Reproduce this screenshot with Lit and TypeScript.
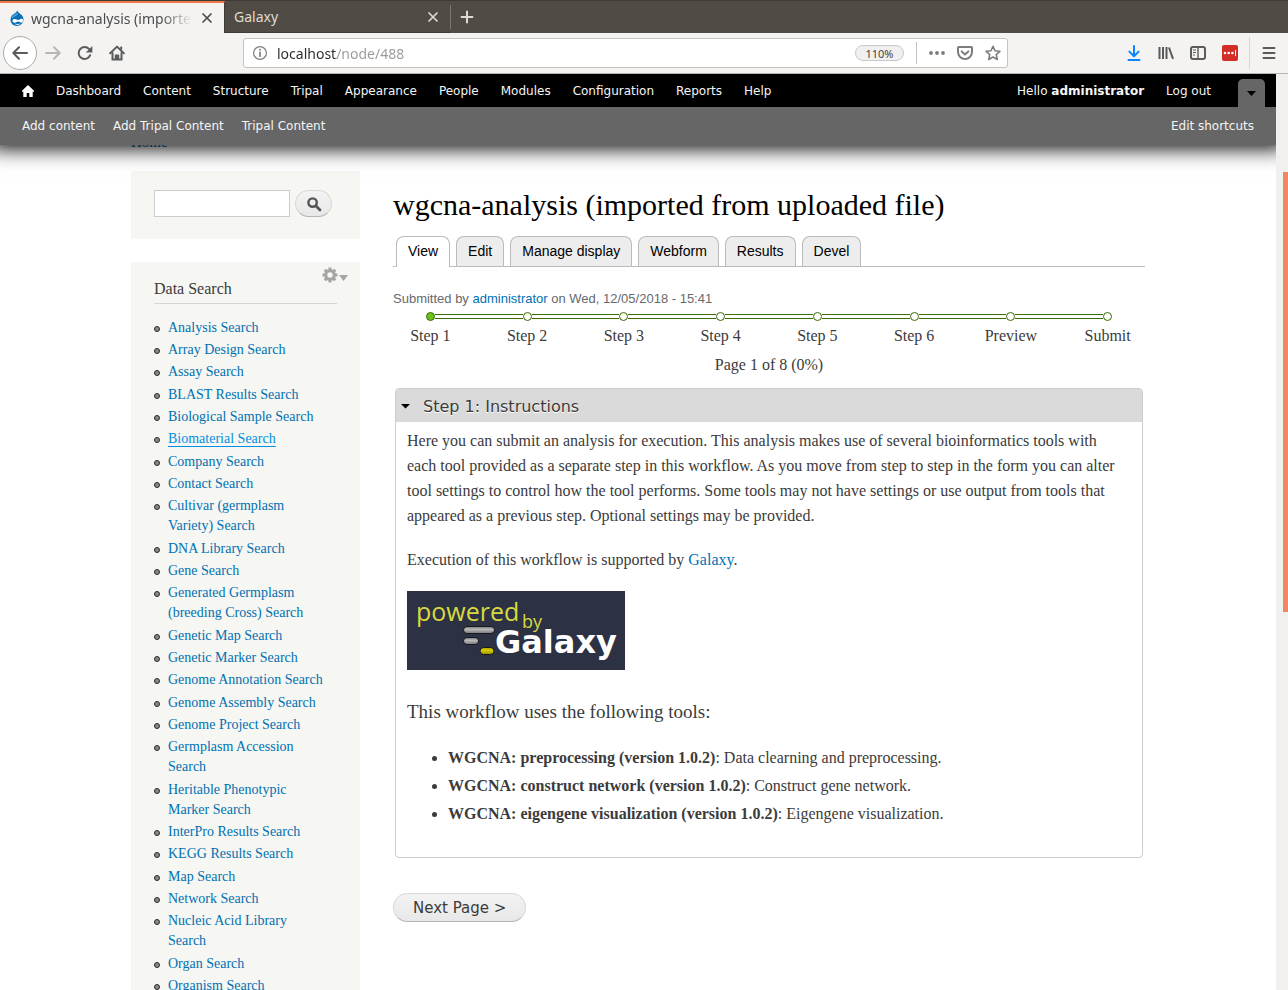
import { LitElement, html, css, svg } from "lit";
import { customElement } from "lit/decorators.js";
import { classMap } from "lit/directives/class-map.js";

const MENU = ["Dashboard", "Content", "Structure", "Tripal", "Appearance", "People", "Modules", "Configuration", "Reports", "Help"];
const SHORTCUTS = ["Add content", "Add Tripal Content", "Tripal Content"];
const SEARCHES = [
  "Analysis Search", "Array Design Search", "Assay Search", "BLAST Results Search", "Biological Sample Search",
  "Biomaterial Search", "Company Search", "Contact Search", "Cultivar (germplasm Variety) Search", "DNA Library Search",
  "Gene Search", "Generated Germplasm (breeding Cross) Search", "Genetic Map Search", "Genetic Marker Search",
  "Genome Annotation Search", "Genome Assembly Search", "Genome Project Search", "Germplasm Accession Search",
  "Heritable Phenotypic Marker Search", "InterPro Results Search", "KEGG Results Search", "Map Search",
  "Network Search", "Nucleic Acid Library Search", "Organ Search", "Organism Search",
];
const TABS = ["View", "Edit", "Manage display", "Webform", "Results", "Devel"];
const STEPS = ["Step 1", "Step 2", "Step 3", "Step 4", "Step 5", "Step 6", "Preview", "Submit"];
const TOOLS = [
  ["WGCNA: preprocessing (version 1.0.2)", "Data clearning and preprocessing."],
  ["WGCNA: construct network (version 1.0.2)", "Construct gene network."],
  ["WGCNA: eigengene visualization (version 1.0.2)", "Eigengene visualization."],
];

const icon = (size: number, body: unknown) =>
  html`<svg width=${size} height=${size} viewBox="0 0 16 16" fill="none" stroke="currentColor" stroke-width="2" stroke-linecap="round" stroke-linejoin="round" aria-hidden="true">${body}</svg>`;

const cross = icon(16, svg`<path d="M4 4l8 8M12 4l-8 8" stroke-width="1.7"/>`);
const plus = icon(16, svg`<path d="M8 1.8v12.4M1.8 8h12.4" stroke-linecap="butt"/>`);
const back = icon(16, svg`<path d="M15 8H1.5M7 2.2L1.3 8L7 13.8"/>`);
const forward = icon(16, svg`<path d="M1 8h13.5M9 2.2L14.7 8L9 13.8"/>`);
const reload = icon(16, svg`<path d="M13.2 10.2A6 6 0 1 1 12 3.9"/><path d="M15.4 1v6.6H8.8z" fill="currentColor" stroke="none"/>`);
const home = icon(16, svg`<path d="M1.2 8.2L8 1.6l6.800 6.600"/><path d="M3.500 8v6.600h9V8" stroke-linejoin="miter"/><path d="M7 10h2.600v4.400H6.400V10z" stroke-width="1.200" fill="currentColor"/><path d="M12.200 1.600v3" stroke-linecap="butt"/>`);
const info = icon(16, svg`<circle cx="8" cy="8" r="6.4" stroke-width="1.2"/><path d="M8 7.4v3.8" stroke-width="1.7"/><circle cx="8" cy="4.8" r="1" fill="currentColor" stroke="none"/>`);
const dots = icon(16, svg`<g fill="currentColor" stroke="none"><circle cx="2" cy="8" r="1.900"/><circle cx="8" cy="8" r="1.900"/><circle cx="14" cy="8" r="1.900"/></g>`);
const pocket = icon(16, svg`<path d="M1.600 2h12.800c.5 0 .6.3.6.7V7a7 7 0 0 1-14 0V2.700c0-.4.1-.7.6-.7z"/><path d="M4.700 6.400L8 9.500l3.300-3.100"/>`);
const star = icon(16, svg`<path d="M8 1.300l2 4.500 4.900.5-3.700 3.300 1.100 4.900L8 12l-4.300 2.500 1.100-4.900L1.100 6.300 6 5.800z" stroke-width="1.600"/>`);
const download = icon(16, svg`<path d="M8 1v9.800M3.400 6.600L8 11.200l4.600-4.600M2.500 14.900h11"/>`);
const library = icon(16, svg`<path d="M1.500 2v12M5 2v12M8.500 2v12M11 2.500l4 11.300" stroke-linecap="butt"/>`);
const sidebarIcon = icon(16, svg`<rect x="1" y="2" width="14" height="12" rx="2"/><path d="M8 2v12" stroke-width="1.400"/><path d="M3 5h3M3 7.500h3M3 10h2" stroke-width="1.200" stroke-linecap="butt"/>`);
const hamburger = icon(16, svg`<path d="M2.500 3h11M2.500 8h11M2.500 13h11"/>`);
const drop = html`<svg width="16" height="16" viewBox="0 0 16 16" aria-hidden="true">
  <path d="M8.300.3C8.700 3 12 3.600 13.600 6.300 16.200 10.900 12.800 16 8 16S-.2 11.100 2.400 6.500C3.800 4 7.400 3.400 8.300.3z" fill="#0a6fb5"/>
  <path d="M8 2.500C6.600 4.500 3.600 5 2.500 8.400c3-.8 4-3 6.500-3.900C8.600 3.800 8.200 3.200 8 2.500z" fill="#4d9fd6"/>
  <path d="M4.200 9.400c2-1.200 3.600.7 5 .6 1.600-.1 2.200-1.500 3.700-1.200 2 .5 1.200 4-.6 4-1.300 0-1.700-1.200-2.900-1.200-1.400 0-2.200 1.400-3.900 1.200-2.100-.3-2.700-2.500-1.300-3.400z" fill="#fff"/>
  <path d="M6.500 14c1.400.8 3 .8 4.200 0" stroke="#fff" fill="none"/>
</svg>`;
const addon = html`<svg width="16" height="16" viewBox="0 0 16 16" aria-hidden="true">
  <rect width="16" height="16" rx="2" fill="#d32d27"/><g fill="#fff"><circle cx="3" cy="8" r="1.300"/><circle cx="6.700" cy="8" r="1.300"/><circle cx="10.400" cy="8" r="1.300"/><rect x="13" y="5" width="1" height="6"/></g>
</svg>`;
const house = html`<svg width="12" height="12" viewBox="0 0 12 12" aria-hidden="true"><path d="M6 0l6 5.800v1H10.700V12H7.300V8H4.700v4H1.300V6.800H0v-1z" fill="#fff"/></svg>`;
const magnifier = icon(16, svg`<circle cx="6.600" cy="6.600" r="4.200" stroke-width="2.400"/><path d="M10 10l4 4" stroke-width="2.800"/>`);
const gear = html`<svg width="28" height="16" viewBox="0 0 28 16" aria-hidden="true">
  <g stroke="#a5a6a2" stroke-width="3"><path d="M8 .5v3M8 12.500v3M.5 8h3M12.500 8h3M2.700 2.700l2 2M11.300 11.300l2 2M13.300 2.700l-2 2M4.700 11.300l-2 2"/></g>
  <circle cx="8" cy="8" r="4.300" fill="none" stroke="#a5a6a2" stroke-width="3.200"/><path d="M17 8h9l-4.500 6z" fill="#a5a6a2"/>
</svg>`;

@customElement("app-root")
export class AppRoot extends LitElement {
  static styles = css`
    :host { display: flex; flex-direction: column; height: 100vh; overflow: hidden; background: #fff; color: #3b3b3b; font-family: "Liberation Serif", serif; font-size: 16px; }
    *, *::before, *::after { box-sizing: border-box; }
    button, input { font: inherit; color: inherit; margin: 0; padding: 0; border: 0; background: none; outline: 0; }
    button { display: inline-flex; align-items: center; justify-content: center; }
    svg { display: block; flex: none; }
    a { color: #0071b3; text-decoration: none; }
    ul { list-style: none; margin: 0; padding: 0; }
    h1, h2, h3, p { margin: 0; font-weight: 400; }

    .tabstrip { display: flex; flex: none; height: 33px; background: #504c45; border-top: 1px solid #3c3b37; font: 14px "Noto Sans", sans-serif; }
    .browser-tab { display: flex; align-items: center; width: 225px; padding: 0 9px; gap: 6px; color: #dfdbd2; border-bottom: 1px solid #3c3b37; }
    .browser-tab.current { background: #f4f3f2; color: #4c4c4c; border-top: 2px solid #f07746; border-bottom: 0; border-right: 1px solid #3c3b37; }
    .tab-title { flex: 1; overflow: hidden; white-space: nowrap; }
    .current .tab-title { mask-image: linear-gradient(90deg, #000 80%, transparent); }
    .new-tab { width: 32px; margin: 4px 0; border-left: 1px solid #7d7972; color: #dfdbd2; }

    .navbar { display: flex; flex: none; align-items: center; height: 41px; background: #f4f3f2; border-bottom: 1px solid #b9b6b2; color: #5b5b5b; padding: 0 11px 0 3px; font: 14px "Noto Sans", sans-serif; }
    .nav-buttons { display: flex; align-items: center; flex: none; width: 240px; }
    .nav-button { width: 32px; height: 32px; }
    .nav-button.back { width: 34px; height: 34px; border: 1px solid #adaba8; border-radius: 50%; background: #fff; }
    .nav-button.off { color: #b9b7b5; }
    .address { display: flex; align-items: center; flex: 1; max-width: 765px; height: 30px; border: 1px solid #c6c2be; border-radius: 3px; background: #fff; padding: 0 6px 0 8px; gap: 9px; color: #7d7d7d; }
    .url { flex: 1; min-width: 0; color: transparent; background: linear-gradient(90deg, #2b2b2b 60px, #999 60px); background-clip: text; -webkit-background-clip: text; }
    .zoom { height: 16px; width: 49px; border: 1px solid #c9c9c9; border-radius: 8px; background: #f0f0f0; color: #444; font-size: 11px; }
    .page-actions { display: flex; align-items: center; gap: 12px; height: 22px; border-left: 1px solid #c4c4c4; padding-left: 12px; margin-left: 3px; }
    .tools { display: flex; align-items: center; gap: 16px; margin-left: auto; }
    .tools .blue { color: #0a84ff; }
    .menu-button { height: 32px; border-left: 1px solid #dad8d6; margin-left: -5px; padding-left: 11px; }

    .viewport { display: flex; flex: 1; min-height: 0; }
    .page { flex: 1; min-width: 0; overflow: hidden; }
    .scrollbar { flex: none; width: 12px; background: #f1f0ee; padding: 98px 0 0 7px; }
    .thumb { height: 440px; background: #f08763; }

    .admin { position: relative; z-index: 1; margin: 0 -10px; padding: 0 10px; background: #666; box-shadow: 0 3px 20px #000; font: 12px "DejaVu Sans", sans-serif; }
    .admin a { color: #f5f5f5; }
    .admin-menu { display: flex; align-items: center; height: 33px; background: #000; margin: 0 -10px; padding: 0 21px 0 32px; color: #fff; }
    .admin-menu ul { display: flex; align-items: center; gap: 22px; }
    .user-links { display: flex; align-items: center; gap: 22px; margin-left: auto; }
    .toggle { align-self: flex-end; width: 27px; height: 28px; margin-left: 27px; border-radius: 5px 5px 0 0; background: #666; }
    .shortcuts { display: flex; align-items: center; justify-content: space-between; height: 38px; padding: 0 22px; }
    .shortcuts ul { display: flex; gap: 18px; }

    .content { max-width: 1014px; margin: -13px auto 0; }
    .crumb { display: block; height: 39px; font-size: 15px; line-height: 20px; }
    .columns { display: flex; gap: 33px; align-items: flex-start; }
    .sidebar { flex: none; width: 229px; display: flex; flex-direction: column; gap: 23px; }
    .block { position: relative; background: #f6f6f2; padding: 17px 23px; }
    .search { display: flex; gap: 5px; padding: 19px 23px 22px; }
    .search-text { width: 136px; height: 27px; background: #fff; border: 1px solid #ccc; }
    .pill { border: 1px solid #d8d8d8; border-bottom-color: #b4b4b4; border-radius: 15px; background: linear-gradient(#f3f3f3, #e8e8e8); }
    .search-go { width: 37px; height: 27px; color: #555; }
    .configure { position: absolute; top: 5px; right: 10px; }
    .block h2 { font-size: 16px; line-height: 20px; padding-bottom: 4px; border-bottom: 1px solid #d6d6d6; margin-bottom: 14px; }
    .links { font-size: 14px; line-height: 20px; padding-right: 12px; }
    .links li { display: flex; padding-bottom: 2px; gap: 8px; }
    .links li:nth-child(3n) { padding-bottom: 3px; }
    .links li::before { content: ""; flex: none; width: 6px; height: 6px; margin-top: 8px; border: 1px solid #2b2b2b; border-radius: 50%; background: #888; }
    .links .hover { color: #018fe2; text-decoration: underline; text-underline-offset: 3px; }

    .main { flex: 1; min-width: 0; padding-top: 16px; }
    h1 { color: #000; font-size: 30px; line-height: 36px; }
    .tabs { display: flex; gap: 6px; padding: 0 3px; margin-top: 13px; border-bottom: 1px solid #bbb; font: 14px "Liberation Sans", sans-serif; }
    .tabs a { display: block; height: 30px; line-height: 29px; padding: 0 11px; color: #000; background: #ededed; border: 1px solid #bbb; border-bottom: 0; border-radius: 8px 8px 0 0; }
    .tabs .active { background: #fff; height: 31px; margin-bottom: -1px; }
    .submitted { margin-top: 23px; color: #68696b; font: 13px/18px "Liberation Sans", sans-serif; }
    .progress { display: flex; margin: 4px -11px 0; }
    .step { flex: 1; text-align: center; line-height: 20px; }
    .track { display: flex; align-items: center; margin-bottom: 5px; }
    .track::before, .track::after { content: ""; flex: 1; height: 5px; border: solid #366c00; border-width: 1px 0; }
    .step:first-child .track::before, .step:last-child .track::after { visibility: hidden; }
    .dot { width: 9px; height: 9px; border: 1px solid #366c00; border-radius: 50%; }
    .step:first-child .dot { background: #6fbf1f; }
    .count { text-align: center; line-height: 20px; margin: 9px 0 13px; }
    .panel { margin: 0 2px; border: 1px solid #ccc; border-radius: 4px; }
    summary { display: flex; align-items: center; gap: 13px; height: 33px; padding: 2px 5px 0; background: #dadada; font: 16px "DejaVu Sans", sans-serif; text-shadow: 0 1px 0 #fff; }
    .panel-body { padding: 6px 15px 31px 11px; line-height: 25px; }
    .panel-body p { margin-bottom: 19px; }
    h3 { font-size: 19px; line-height: 24px; margin: 30px 0 21px; }
    .bullets { display: flex; flex-direction: column; gap: 3px; padding-left: 41px; list-style: disc; }
    .bullets li { display: list-item; }
    .next { height: 29px; margin-top: 35px; padding: 0 19px; font: 15px "DejaVu Sans", sans-serif; }
  `;

  render() {
    return html`
      <div class="tabstrip">
        <div class="browser-tab current">${drop}<span class="tab-title">wgcna-analysis (imported</span><button aria-label="Close tab">${cross}</button></div>
        <div class="browser-tab"><span class="tab-title">Galaxy</span><button aria-label="Close tab">${cross}</button></div>
        <button class="new-tab" aria-label="New tab">${plus}</button>
      </div>
      <div class="navbar">
        <div class="nav-buttons">
          <button class="nav-button back" aria-label="Back">${back}</button>
          <button class="nav-button off" aria-label="Forward">${forward}</button>
          <button class="nav-button" aria-label="Reload">${reload}</button>
          <button class="nav-button" aria-label="Home">${home}</button>
        </div>
        <div class="address">
          ${info}<input class="url" aria-label="Address" value="localhost/node/488">
          <button class="zoom">110%</button>
          <div class="page-actions">
            <button aria-label="Page actions">${dots}</button><button aria-label="Save to Pocket">${pocket}</button><button aria-label="Bookmark">${star}</button>
          </div>
        </div>
        <div class="tools">
          <button class="blue" aria-label="Downloads">${download}</button><button aria-label="Library">${library}</button>
          <button aria-label="Sidebars">${sidebarIcon}</button><button aria-label="Extension">${addon}</button>
          <button class="menu-button" aria-label="Menu">${hamburger}</button>
        </div>
      </div>
      <div class="viewport">
        <div class="page">
          <nav class="admin">
            <div class="admin-menu">
              <ul><li><a href="#" aria-label="Home">${house}</a></li>${MENU.map((m) => html`<li><a href="#">${m}</a></li>`)}</ul>
              <div class="user-links"><a href="#">Hello <strong>administrator</strong></a><a href="#">Log out</a></div>
              <button class="toggle" aria-label="Hide shortcuts"><svg width="9" height="5" viewBox="0 0 9 5"><path d="M0 0h9L4.500 5z"/></svg></button>
            </div>
            <div class="shortcuts">
              <ul>${SHORTCUTS.map((s) => html`<li><a href="#">${s}</a></li>`)}</ul>
              <a href="#">Edit shortcuts</a>
            </div>
          </nav>
          <div class="content">
            <a class="crumb" href="#">Home</a>
            <div class="columns">
              <aside class="sidebar">
                <form class="block search">
                  <input class="search-text" type="text" aria-label="Search">
                  <button class="pill search-go" type="button" aria-label="Search">${magnifier}</button>
                </form>
                <section class="block">
                  <button class="configure" aria-label="Configure block">${gear}</button>
                  <h2>Data Search</h2>
                  <ul class="links">${SEARCHES.map((s) => html`<li><a href="#" class=${classMap({ hover: s === "Biomaterial Search" })}>${s}</a></li>`)}</ul>
                </section>
              </aside>
              <main class="main">
                <h1>wgcna-analysis (imported from uploaded file)</h1>
                <nav class="tabs">${TABS.map((t, i) => html`<a href="#" class=${classMap({ active: i === 0 })}>${t}</a>`)}</nav>
                <p class="submitted">Submitted by <a href="#">administrator</a> on Wed, 12/05/2018 - 15:41</p>
                <div class="progress">${STEPS.map((s) => html`<div class="step"><div class="track"><span class="dot"></span></div>${s}</div>`)}</div>
                <p class="count">Page 1 of 8 (0%)</p>
                <details class="panel" open>
                  <summary><svg width="9" height="5" viewBox="0 0 9 5"><path d="M0 0h9L4.500 4.500z"/></svg>Step 1: Instructions</summary>
                  <div class="panel-body">
                    <p>Here you can submit an analysis for execution. This analysis makes use of several bioinformatics tools with each tool provided as a separate step in this workflow. As you move from step to step in the form you can alter tool settings to control how the tool performs. Some tools may not have settings or use output from tools that appeared as a previous step. Optional settings may be provided.</p>
                    <p>Execution of this workflow is supported by <a href="#">Galaxy</a>.</p>
                    ${this.logo()}
                    <h3>This workflow uses the following tools:</h3>
                    <ul class="bullets">${TOOLS.map(([n, d]) => html`<li><strong>${n}</strong>: ${d}</li>`)}</ul>
                  </div>
                </details>
                <button class="pill next">Next Page &gt;</button>
              </main>
            </div>
          </div>
        </div>
        <div class="scrollbar"><div class="thumb"></div></div>
      </div>
    `;
  }

  private logo() {
    return html`<svg width="218" height="79" viewBox="0 0 218 79" role="img" aria-label="powered by Galaxy">
      <defs>
        <linearGradient id="grey" x2="0" y2="1"><stop stop-color="#777"/><stop offset=".4" stop-color="#bbb"/><stop offset="1" stop-color="#777"/></linearGradient>
        <linearGradient id="gold" x2="0" y2="1"><stop stop-color="#aaa000"/><stop offset=".4" stop-color="#d6cc00"/><stop offset="1" stop-color="#968e00"/></linearGradient>
      </defs>
      <rect width="218" height="79" fill="#2c3143"/>
      <g stroke="#15171f"><rect x="56.500" y="35.500" width="31" height="7" rx="3.500" fill="url(#grey)"/><rect x="56.500" y="46.500" width="15" height="7" rx="3.500" fill="url(#grey)"/><rect x="73" y="56.500" width="14" height="7" rx="3.500" fill="url(#gold)"/></g>
      <g font-family="Open Sans, sans-serif" fill="#d8d940"><text x="9" y="30" font-size="25">powered</text><text x="115" y="37" font-size="18">by</text></g>
      <text x="88" y="62" font-family="DejaVu Sans, sans-serif" font-weight="700" font-size="32" fill="#fff">Galaxy</text>
    </svg>`;
  }
}
